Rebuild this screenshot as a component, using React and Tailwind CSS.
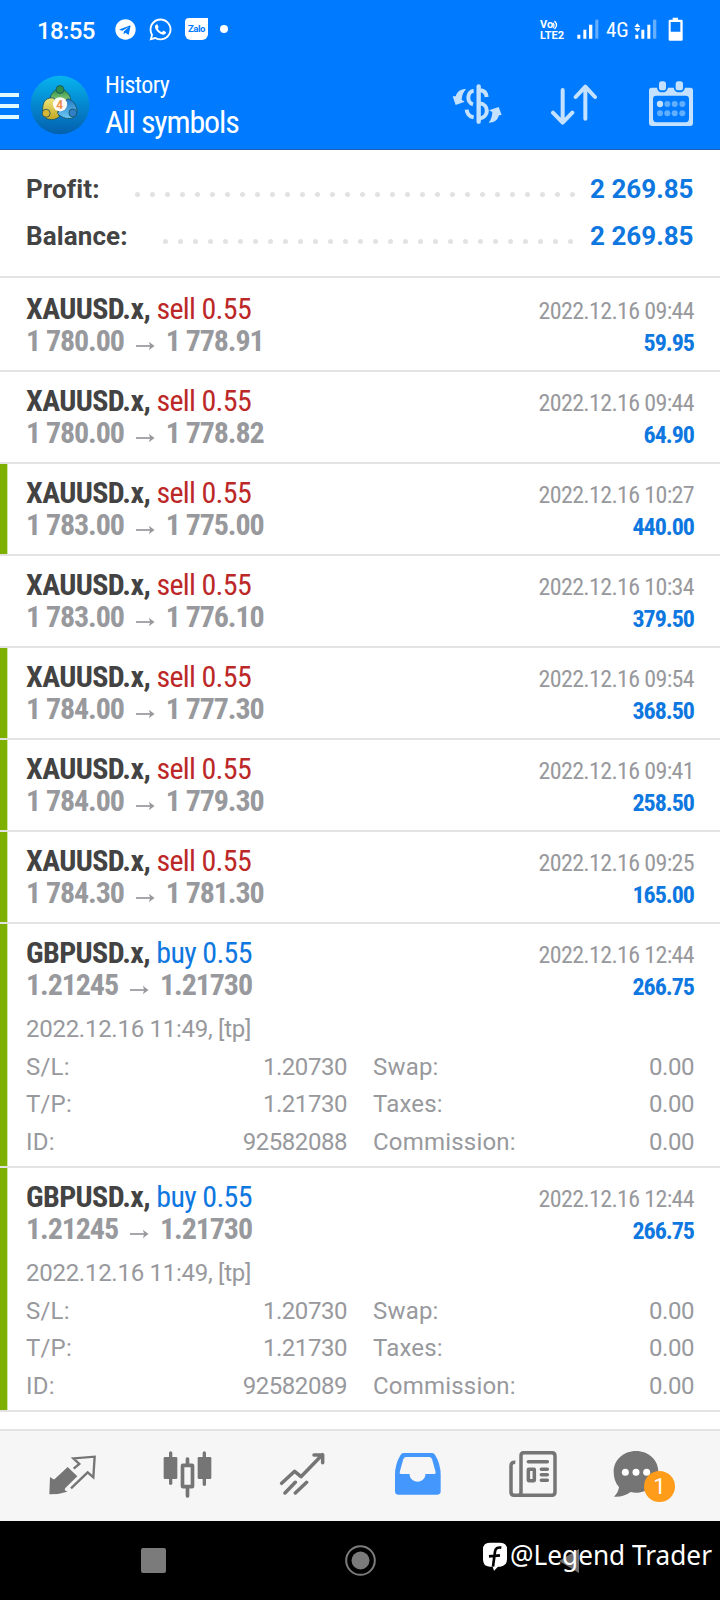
import { FaTelegram, FaWhatsapp } from "react-icons/fa";

const DEALS = [
  { symbol: "XAUUSD.x", side: "sell", lot: "0.55", open: "1 780.00", close: "1 778.91", time: "2022.12.16 09:44", profit: "59.95" },
  { symbol: "XAUUSD.x", side: "sell", lot: "0.55", open: "1 780.00", close: "1 778.82", time: "2022.12.16 09:44", profit: "64.90" },
  { symbol: "XAUUSD.x", side: "sell", lot: "0.55", open: "1 783.00", close: "1 775.00", time: "2022.12.16 10:27", profit: "440.00", marked: true },
  { symbol: "XAUUSD.x", side: "sell", lot: "0.55", open: "1 783.00", close: "1 776.10", time: "2022.12.16 10:34", profit: "379.50" },
  { symbol: "XAUUSD.x", side: "sell", lot: "0.55", open: "1 784.00", close: "1 777.30", time: "2022.12.16 09:54", profit: "368.50", marked: true },
  { symbol: "XAUUSD.x", side: "sell", lot: "0.55", open: "1 784.00", close: "1 779.30", time: "2022.12.16 09:41", profit: "258.50", marked: true },
  { symbol: "XAUUSD.x", side: "sell", lot: "0.55", open: "1 784.30", close: "1 781.30", time: "2022.12.16 09:25", profit: "165.00", marked: true },
  { symbol: "GBPUSD.x", side: "buy", lot: "0.55", open: "1.21245", close: "1.21730", time: "2022.12.16 12:44", profit: "266.75", marked: true, id: "92582088" },
  { symbol: "GBPUSD.x", side: "buy", lot: "0.55", open: "1.21245", close: "1.21730", time: "2022.12.16 12:44", profit: "266.75", marked: true, id: "92582089" },
];

function StatusBar() {
  return (
    <div className="flex h-[60px] items-start text-white">
      <span className="mt-[17px] ml-[37px] w-[78px] text-[24px] leading-[28px] font-medium tracking-[-0.6px]">18:55</span>
      <FaTelegram className="mt-[19px] h-[21px] w-[21px]" />
      <FaWhatsapp className="mt-[17px] ml-[12px] h-[25px] w-[25px]" />
      <div className="mt-[18px] ml-[12px] flex h-[22px] w-[23px] items-center justify-center rounded-[4px_0_6px_6px] bg-white text-[9.5px] font-bold tracking-tighter text-[#007bff]">
        Zalo
      </div>
      <div className="mt-[25px] ml-[12px] h-[8px] w-[8px] rounded-full bg-white" />
      <div className="mt-[20px] ml-[312px] w-[26px] text-[11px] leading-[10.5px] font-bold">
        <div className="flex">
          Vo
          <svg viewBox="0 0 8 10" className="-ml-px h-[10px] w-[8px]" fill="none" stroke="currentColor" strokeWidth="1.3">
            <path d="M1 3q2 2.500 0 5M2.500 1q4 4 0 8" />
          </svg>
        </div>
        <div>LTE2</div>
      </div>
      <svg viewBox="650 58 66 60" className="mt-[19px] ml-[11px] h-[20px] w-[22px]" fill="currentColor">
        <path d="M651 105h9v12h-9zM669 90h9v27h-9zM686 75h10v42h-10z" />
        <path d="M705 60h9v57h-9z" opacity=".4" />
      </svg>
      <span className="mt-[17px] ml-[7px] w-[28px] text-[21px] leading-[26px] [font-stretch:75%]">4G</span>
      <svg viewBox="821 58 69 60" className="mt-[19px] h-[20px] w-[23px]" fill="currentColor">
        <path d="M822 82l9-11 9 11zM822 86l9 11 9-11zM825 105h9v12h-9zM843 90h9v27h-9zM861 75h9v42h-9z" />
        <path d="M878 60h10v57h-10z" opacity=".4" />
      </svg>
      <svg viewBox="924 52 45 72" className="mt-[17px] ml-[11px] h-[24px] w-[15px]" fill="currentColor">
        <path fillRule="evenodd" d="M938 54h16v6h10q4 0 4 4v56q0 3-3 3h-36q-3 0-3-3v-56q0-4 4-4h8zM932 67v29h29v-29z" />
      </svg>
    </div>
  );
}

function Logo() {
  return (
    <svg viewBox="90 44 180 182" className="h-[60px] w-[60px]">
      <defs>
        <linearGradient id="sky" x1="0" y1="0" x2="0" y2="1">
          <stop offset="0" stopColor="#08b4ee" />
          <stop offset=".5" stopColor="#0487cf" />
          <stop offset="1" stopColor="#0460ad" />
        </linearGradient>
        <linearGradient id="leaf" x1="0" y1="0" x2="0" y2="1">
          <stop offset="0" stopColor="#2f9147" />
          <stop offset="1" stopColor="#a5dc8c" />
        </linearGradient>
        <linearGradient id="gold" x1="0" y1="0" x2="0" y2="1">
          <stop offset="0" stopColor="#eee77c" />
          <stop offset="1" stopColor="#c2a51f" />
        </linearGradient>
        <linearGradient id="water" x1="0" y1="0" x2="0" y2="1">
          <stop offset="0" stopColor="#2479c4" />
          <stop offset="1" stopColor="#6cc8f4" />
        </linearGradient>
      </defs>
      <circle cx="180" cy="135" r="89" fill="url(#sky)" />
      <g stroke="#175060" strokeWidth="2.500">
        <path d="M150 124c-2-18 8-32 22-36h16c16 6 26 20 24 38l-12 6-38-2z" fill="url(#leaf)" />
        <path d="M136 120c8-6 18-8 26-6l16 56c-10 10-26 12-40 6l-10-18c-2-16 0-28 8-38z" fill="url(#gold)" />
        <path d="M202 116c14 2 28 16 30 36l-10 20c-14 8-36 4-50-12l8-10z" fill="url(#water)" />
        <circle cx="180" cy="88" r="12" fill="#2f8f49" />
        <circle cx="138" cy="160" r="12" fill="#d9b634" />
        <circle cx="219" cy="159" r="12" fill="#2f80c6" />
      </g>
      <circle cx="180" cy="133" r="21.500" fill="#fffaf3" />
      <text x="179" y="146" textAnchor="middle" fontSize="36" fontWeight="700" fill="#f08c4a" fontFamily="Roboto">4</text>
    </svg>
  );
}

function Toolbar() {
  return (
    <div className="flex h-[90px] items-start border-b border-[#1c62b5] text-white">
      <div className="mt-[33px] flex w-[19px] flex-col gap-[7px]">
        <div className="h-[4px] bg-[#e0faff]" />
        <div className="h-[4px] bg-[#e0faff]" />
        <div className="h-[4px] bg-[#e0faff]" />
      </div>
      <div className="mt-[15px] ml-[11px]">
        <Logo />
      </div>
      <div className="ml-[15px] w-[347px] whitespace-nowrap [font-stretch:75%]">
        <div className="mt-[10px] text-[24px] leading-[30px] tracking-[-0.5px]">History</div>
        <div className="mt-[3px] text-[32px] leading-[38px] tracking-[-1.15px] [font-weight:430]">All symbols</div>
      </div>
      <svg viewBox="276 252 150 120" className="mt-[24px] h-[40px] w-[50px]" fill="none" stroke="#c4e2ff" strokeWidth="12">
        <path d="M356 259v106" strokeLinecap="round" strokeWidth="13" />
        <path d="M341 272c-20 2-22 36-2 41M320 329q2 20 21 23" />
        <path d="M358 271q20 0 22 20M358 310c30 2 30 42 0 46" />
        <path d="M318 267c-16 0-26 6-31 22l-9 0 9 26 27-10-9-6c1-14 5-22 13-32z" fill="#c4e2ff" stroke="none" />
        <path d="M386 368c16 0 26-6 31-22l8-1-9-24-29 10 10 5c-1 14-3 22-11 32z" fill="#c4e2ff" stroke="none" />
      </svg>
      <svg viewBox="570 252 144 126" className="mt-[24px] ml-[48px] h-[42px] w-[48px]" fill="none" stroke="#c4e2ff" strokeWidth="12" strokeLinecap="round" strokeLinejoin="round">
        <path d="M608 270v97M579 338l29 30 29-30M676 356v-95M647 291l29-31 29 31" />
      </svg>
      <svg viewBox="864 243 138 135" className="mt-[21px] ml-[50px] h-[45px] w-[46px]" fill="#c4e2ff">
        <path fillRule="evenodd" d="M875 263h16q2 14 16 14t17-14h17q3 14 17 14t17-14h16q8 0 8 8v98q0 9-9 9h-114q-9 0-9-9v-98q0-8 8-8zM889 287q-10 0-10 10v58q0 12 10 12h88q10 0 10-12v-58q0-10-10-10z" />
        <rect x="897" y="244" width="21" height="27" rx="8" />
        <rect x="947" y="244" width="22" height="27" rx="8" />
        <circle cx="900" cy="312" r="9.500" />
        <g opacity=".5">
          <circle cx="922" cy="312" r="9" />
          <circle cx="944" cy="312" r="9" />
          <circle cx="967" cy="312" r="9" />
          <circle cx="900" cy="340" r="9" />
          <circle cx="922" cy="340" r="9" />
          <circle cx="944" cy="340" r="9" />
          <circle cx="967" cy="340" r="9" />
        </g>
      </svg>
    </div>
  );
}

function SummaryRow({ label, value, dots, dotsEnd }) {
  return (
    <div className="flex h-[47px] text-[26px] leading-[47px] font-bold">
      <span className="tracking-[0.1px] text-[#434343]">{label}</span>
      <div className={`mt-[26px] ml-auto flex h-[5px] gap-[10px] ${dotsEnd}`}>
        {Array.from({ length: dots }, (_, i) => (
          <div key={i} className="h-[5px] w-[5px] rounded-full bg-[#e2e2e2]" />
        ))}
      </div>
      <span className="w-[103px] text-right whitespace-nowrap text-[#0f77e0]">{value}</span>
    </div>
  );
}

function Detail({ label, value }) {
  return (
    <div className="flex justify-between">
      <span className="tracking-[0.2px]">{label}</span>
      <span className="tracking-[-0.45px]">{value}</span>
    </div>
  );
}

function DealRow({ deal }) {
  const sell = deal.side === "sell";
  return (
    <div className={`relative border-b-2 border-[#e3e3e3] pr-[26px] pl-[26px] pt-[13px] ${deal.id ? "pb-[6px]" : "pb-[13px]"}`}>
      {deal.marked && <div className="absolute top-0 bottom-0 left-0 w-[8px] border-r border-[#d3e5a5] bg-[#7db000]" />}
      <div className="flex h-[64px] justify-between whitespace-nowrap [font-stretch:75%]">
        <div className="text-[30px] leading-[32px]">
          <div>
            <span className="font-bold tracking-[-0.62px] text-[#434343]">{deal.symbol}, </span>
            <span className={`tracking-[-0.68px] ${sell ? "text-[#bc2828]" : "text-[#0f77e0]"}`}>
              {deal.side} {deal.lot}
            </span>
          </div>
          <div className="flex font-bold tracking-[-1.1px] text-[#98999d]">
            {deal.open}
            <svg viewBox="0 0 20 10" className="mt-[16px] mr-[11px] ml-[12px] h-[10px] w-[19px]" fill="none" stroke="currentColor" strokeWidth="1.8">
              <path d="M0 5h18" />
              <path d="M13.500 0.500l6 4.500-6 4.500 1.500-4.500z" fill="currentColor" stroke="none" />
            </svg>
            {deal.close}
          </div>
        </div>
        <div className="pt-[2px] text-right text-[24px] leading-[32px]">
          <div className="tracking-[-0.66px] text-[#98999d]">{deal.time}</div>
          <div className="font-bold tracking-[-1px] text-[#0f77e0]">{deal.profit}</div>
        </div>
      </div>
      {deal.id && (
        <div className="mt-[9px] text-[24px] text-[#98999d]">
          <div className="leading-[38px] tracking-[-0.27px]">2022.12.16 11:49, [tp]</div>
          <div className="grid h-[112px] grid-cols-[321px_321px] content-start gap-x-[26px] pt-px leading-[37.3px]">
            <Detail label="S/L:" value="1.20730" />
            <Detail label="Swap:" value="0.00" />
            <Detail label="T/P:" value="1.21730" />
            <Detail label="Taxes:" value="0.00" />
            <Detail label="ID:" value={deal.id} />
            <Detail label="Commission:" value="0.00" />
          </div>
        </div>
      )}
    </div>
  );
}

function TabBar() {
  return (
    <div className="flex h-[92px] items-start border-t-2 border-[#e3e3e3] bg-[#f6f6f6] text-[#757575]">
      <svg viewBox="147 162 141 126" className="mt-[23px] ml-[49px] h-[42px] w-[47px]">
        <path fill="currentColor" d="M150 231l9 6q3 2 6-1l38-35 29 28-36 35-2 6 8 5q-24 8-52 8-2 0-2-2z" />
        <path fill="none" stroke="currentColor" strokeWidth="7" d="M221 206l17-14-18-17 64-5-4 62-17-15-50 48" />
      </svg>
      <svg viewBox="489 153 147 141" className="mt-[20px] ml-[67px] h-[47px] w-[49px]" fill="currentColor">
        <rect x="491" y="171" width="41" height="66" rx="4" />
        <rect x="507" y="154" width="10" height="101" rx="5" />
        <rect x="593" y="171" width="41" height="66" rx="4" />
        <rect x="608" y="154" width="10" height="104" rx="5" />
        <rect x="557" y="172" width="11" height="24" rx="5" />
        <rect x="557" y="256" width="11" height="37" rx="5" />
        <rect x="547.500" y="196" width="30" height="64" rx="1" fill="none" stroke="currentColor" strokeWidth="11" />
      </svg>
      <svg viewBox="837 156 138 129" className="mt-[21px] ml-[67px] h-[43px] w-[46px]" fill="none" stroke="currentColor" strokeWidth="10.500" strokeLinecap="round" strokeLinejoin="round">
        <path d="M845 250l39-36 19 16 64-66M942 165l26-1v24M855 279l31-32M886 279l34-32" />
      </svg>
      <svg viewBox="102 156 141 129" className="mt-[21px] ml-[69px] h-[43px] w-[47px]">
        <path fill="#4397fd" fillRule="evenodd" d="M130 159h86q6 0 9 5 17 28 17 60v50q0 10-10 10h-118q-9 0-9-10v-50q0-32 17-60 3-5 8-5zM138 171q-5 0-8 6l-11 40q-1 5 4 5h26v5a24 23 0 0 0 47 0v-5h27q5 0 4-5l-11-40q-3-6-8-6z" />
      </svg>
      <svg viewBox="447 153 144 138" className="mt-[20px] ml-[68px] h-[46px] w-[48px]" fill="none" stroke="currentColor" strokeWidth="10.500">
        <path d="M466 187q-13-1-13 10v79q0 10 10 10h111q11 0 11-10v-108q0-10-10-10h-83q-9 0-9 9v110q0 8-7 9" />
        <path d="M505 185h57M544 208h18M544 224h18M544 241h18" strokeLinecap="round" />
        <rect x="505" y="208" width="18" height="34" rx="1" />
      </svg>
      <div className="relative mt-[20px] ml-[56px]">
        <svg viewBox="759 153 138 138" className="h-[46px] w-[46px]">
          <path fill="currentColor" d="M828 153c38 0 67 27 67 62s-29 63-67 63q-8 0-16-2-22 16-50 14 14-14 15-29-16-17-16-46c0-35 29-62 67-62z" />
          <circle cx="796" cy="217" r="10.500" fill="#fff" />
          <circle cx="828" cy="217" r="10.500" fill="#fff" />
          <circle cx="860" cy="217" r="10.500" fill="#fff" />
        </svg>
        <div className="absolute top-[20px] left-[31px] h-[31px] w-[31px] rounded-full bg-[#ff9c1a] text-center text-[22px] leading-[32px] text-white">1</div>
      </div>
    </div>
  );
}

function SystemNav() {
  return (
    <div className="relative flex h-[79px] items-start bg-black text-[#7b7b7b]">
      <div className="mt-[27px] ml-[141px] h-[25px] w-[25px] rounded-[2px] bg-[#7b7b7b]" />
      <svg viewBox="0 0 31 31" className="mt-[24px] ml-[179px] h-[31px] w-[31px]">
        <circle cx="15.500" cy="15.500" r="14.300" fill="none" stroke="currentColor" strokeWidth="2" />
        <circle cx="15.500" cy="15.500" r="9" fill="currentColor" />
      </svg>
      <svg viewBox="0 0 22 26" className="mt-[27px] ml-[182px] h-[26px] w-[22px]" fill="#6f6f6f">
        <path d="M21 1v24L1 13z" />
      </svg>
      <div className="absolute top-[16px] left-[482px] flex items-start whitespace-nowrap text-white">
        <svg viewBox="366 427 78 87" className="mt-[5px] h-[29px] w-[26px]">
          <path fill="#fff" d="M389 429h32q20 0 20 20v30q0 20-20 22h-7l-12 12-4-12h-9q-20 0-20-22v-30q0-20 20-20z" />
          <path fill="none" stroke="#000" strokeWidth="8" d="M424 444q-17-3-19 12l-6 45M387 470l33-3" />
        </svg>
        <span className="ml-[2px] origin-left scale-x-[0.97] font-['Noto_Sans',sans-serif] text-[27px] leading-[35px]">@Legend Trader</span>
      </div>
    </div>
  );
}

export default function App() {
  return (
    <div className="flex h-[1600px] w-[720px] flex-col overflow-hidden bg-white font-['Roboto',sans-serif]">
      <header className="bg-[#007bff]">
        <StatusBar />
        <Toolbar />
      </header>
      <section className="h-[128px] border-b-2 border-[#e3e3e3] pt-[16px] pr-[27px] pl-[26px]">
        <SummaryRow label="Profit:" value="2 269.85" dots={30} dotsEnd="mr-[15px]" />
        <SummaryRow label="Balance:" value="2 269.85" dots={28} dotsEnd="mr-[17px]" />
      </section>
      <main className="flex-1 pt-[2px]">
        {DEALS.map((deal, i) => (
          <DealRow key={i} deal={deal} />
        ))}
      </main>
      <TabBar />
      <SystemNav />
    </div>
  );
}
